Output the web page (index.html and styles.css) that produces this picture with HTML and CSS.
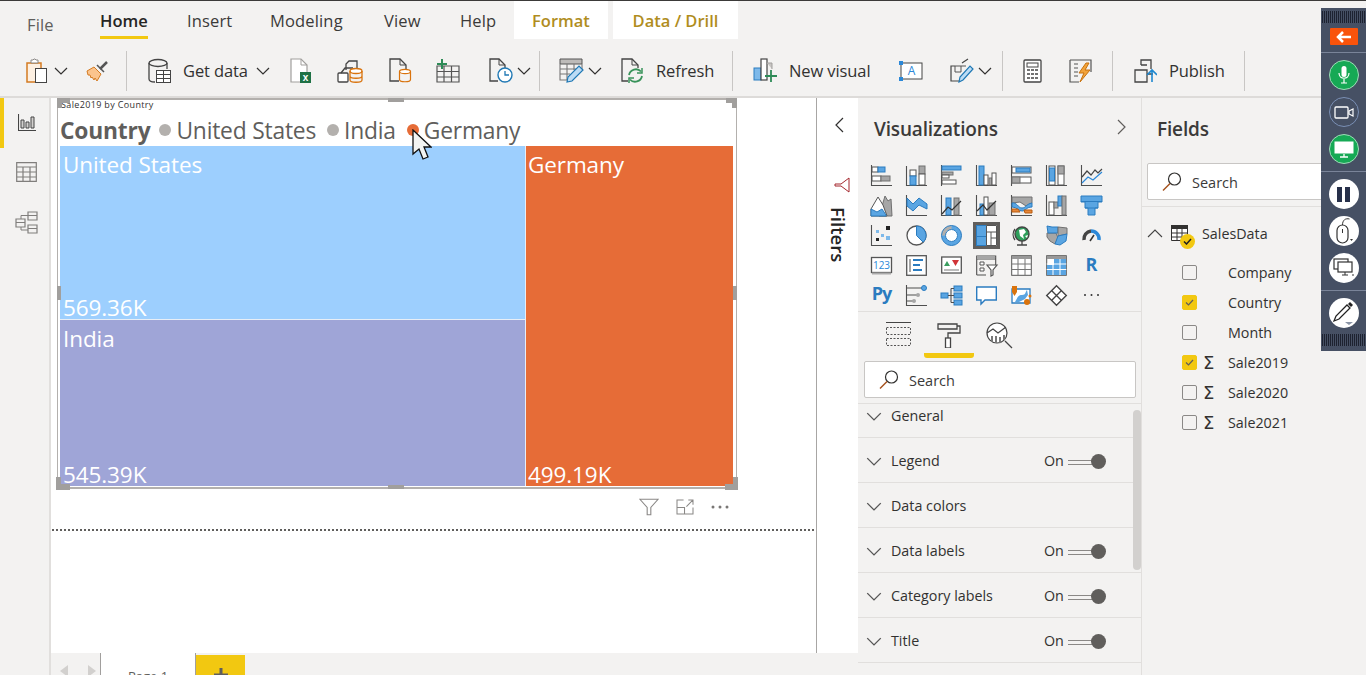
FILE: index.html
```html
<!DOCTYPE html>
<html lang="en">
<head>
    <meta charset="UTF-8">
    <title>Power BI Desktop</title>
    <link rel="stylesheet" href="styles.css">
</head>
<body>
<svg class="sprite" width="0" height="0">
    <symbol id="chev-down" viewBox="0 0 14 8"><path d="M1 1l6 6 6-6" fill="none" stroke="currentColor" stroke-width="1.200"/></symbol>
    <symbol id="lens" viewBox="0 0 20 20"><circle cx="12.500" cy="7" r="6" fill="none" stroke="#323130" stroke-width="1.200"/><path d="M8 11.500L1 18.500" stroke="#a4501c" stroke-width="1.400"/></symbol>
</svg>

<div class="app">
    <header class="ribbon">
        <nav class="tabs">
            <a class="tab tab-file">File</a>
            <a class="tab tab-active">Home</a>
            <a class="tab">Insert</a>
            <a class="tab">Modeling</a>
            <a class="tab">View</a>
            <a class="tab">Help</a>
            <a class="tab-context tab-format">Format</a>
            <a class="tab-context tab-data">Data / Drill</a>
        </nav>
        <div class="toolbar">
            <svg class="tool at-26" width="24" height="26" viewBox="0 0 24 26"><rect x="1" y="5" width="14" height="19" fill="#fdf0e2" stroke="#d47b22" stroke-width="1.500"/><path d="M5 5V2h2l1-1h1l1 1h2v3z" fill="#fff" stroke="#8a8886"/><rect x="9.500" y="10.500" width="11" height="14" fill="#fff" stroke="#444"/></svg>
            <svg class="chev"><use href="#chev-down"/></svg>
            <svg class="tool gap-18" width="24" height="24" viewBox="0 0 24 24"><path d="M1 12l7-4 7 7-4 7-2-3-1 2-2-3-1 1-1-3-2 0z" fill="#fbc48d" stroke="#d47b22"/><path d="M14 10l7-7" stroke="#555" stroke-width="2.500"/><path d="M11 6l7 7" stroke="#555" stroke-width="1.500"/></svg>
            <span class="divider divider-first"></span>
            <svg class="tool" width="24" height="26" viewBox="0 0 24 26"><ellipse cx="10" cy="5" rx="9" ry="3.500" fill="none" stroke="#444" stroke-width="1.300"/><path d="M1 5v16c0 2 3 3 6 3M19 5v6" fill="none" stroke="#444" stroke-width="1.300"/><rect x="8.500" y="12.500" width="14" height="12" fill="#fff" stroke="#444"/><path d="M8.500 16.500h14M8.500 20.500h14M15.500 12.500v12" stroke="#444"/></svg>
            <span class="tool-label label-get">Get data</span>
            <svg class="chev chev-get"><use href="#chev-down"/></svg>
            <svg class="tool gap-20" width="22" height="26" viewBox="0 0 22 26"><path d="M1 1h10l6 6v17H1z" fill="#fff" stroke="#a19f9d" stroke-width="1.200"/><path d="M11 1v6h6" fill="none" stroke="#a19f9d"/><rect x="10" y="14" width="11" height="11" fill="#1e7145"/><text class="xl" x="15.500" y="23">x</text></svg>
            <svg class="tool gap-25" width="26" height="24" viewBox="0 0 26 24"><path d="M9 11V5l3-3h8v7" fill="none" stroke="#444" stroke-width="1.300"/><rect x="1" y="14" width="10" height="9" rx="1" fill="#fff" stroke="#444" stroke-width="1.300"/><path d="M4 14l4-5h8" fill="none" stroke="#444" stroke-width="1.300"/><ellipse cx="19" cy="12" rx="6" ry="2.500" fill="#fff" stroke="#d9730d" stroke-width="1.300"/><path d="M13 12v9c0 3 12 3 12 0v-9M13 17c0 3 12 3 12 0" fill="none" stroke="#d9730d" stroke-width="1.300"/></svg>
            <svg class="tool gap-26" width="23" height="25" viewBox="0 0 23 25"><path d="M10 23H1V1h10l6 6v4" fill="none" stroke="#444" stroke-width="1.300"/><path d="M11 1v6h6" fill="none" stroke="#444"/><ellipse cx="16" cy="13.500" rx="5.500" ry="2.200" fill="#fff" stroke="#d9730d" stroke-width="1.200"/><path d="M10.500 13.500v8c0 3 11 3 11 0v-8" fill="none" stroke="#d9730d" stroke-width="1.200"/></svg>
            <svg class="tool gap-24" width="24" height="24" viewBox="0 0 24 24"><path d="M1 7h22v16H1zM1 12.500h22M1 18h22M8 7v16M15.500 7v16" fill="none" stroke="#555" stroke-width="1.200"/><path d="M6 0v10M1 5h10" stroke="#2e8b57" stroke-width="2"/></svg>
            <svg class="tool gap-29" width="24" height="25" viewBox="0 0 24 25"><path d="M9 23H1V1h9l6 6v3" fill="none" stroke="#444" stroke-width="1.300"/><path d="M10 1v6h6" fill="none" stroke="#444"/><circle cx="16" cy="17" r="7" fill="#fff" stroke="#1f78b4" stroke-width="1.400"/><path d="M16 13v4h4" fill="none" stroke="#1f78b4" stroke-width="1.300"/></svg>
            <svg class="chev"><use href="#chev-down"/></svg>
            <span class="divider divider-a"></span>
            <svg class="tool gap-19" width="25" height="25" viewBox="0 0 25 25"><path d="M1 1h22v5H1z" fill="#bdbbb9" stroke="#555"/><path d="M1 6v16h9M23 6v5M8 6v16M15 6v6M1 11h16M1 16h10" fill="none" stroke="#777" stroke-width="1.100"/><path d="M8 24l1-5L20 8l4 4L13 23z" fill="#bcdcf5" stroke="#1f78b4" stroke-width="1.200"/></svg>
            <svg class="chev"><use href="#chev-down"/></svg>
            <svg class="tool gap-19" width="23" height="25" viewBox="0 0 23 25"><path d="M7 23H1V1h10l6 6v3" fill="none" stroke="#444" stroke-width="1.300"/><path d="M11 1v6h6" fill="none" stroke="#444"/><path d="M8 17a7 7 0 0 1 12-3.500M21 18a7 7 0 0 1-12 3.500" fill="none" stroke="#38935a" stroke-width="1.800"/><path d="M21 10v5h-5M8 25v-5h5" fill="none" stroke="#38935a" stroke-width="1.500"/></svg>
            <span class="tool-label label-refresh">Refresh</span>
            <span class="divider divider-b"></span>
            <svg class="tool gap-20" width="24" height="25" viewBox="0 0 24 25"><rect x="1" y="10" width="7" height="12" fill="#7db9ea" stroke="#2b7cc0"/><rect x="8" y="1" width="6" height="21" fill="#fff" stroke="#444" stroke-width="1.200"/><path d="M14 5h5v6" fill="#c8c6c4" stroke="#a19f9d"/><path d="M18 12v12M12 18h12" stroke="#2e8b57" stroke-width="1.800"/></svg>
            <span class="tool-label label-visual">New visual</span>
            <svg class="tool gap-27" width="25" height="22" viewBox="0 0 25 22"><rect x="2" y="3" width="21" height="16" fill="#fff" stroke="#444"/><rect x="0" y="1" width="4" height="4" fill="#2b88d8"/><rect x="0" y="17" width="4" height="4" fill="#2b88d8"/><text class="a-mark" x="12.500" y="15">A</text></svg>
            <svg class="tool gap-26" width="24" height="25" viewBox="0 0 24 25"><path d="M10 23H1V8h4M12 5l6-4" fill="none" stroke="#444" stroke-width="1.200"/><path d="M5 8h6v6H5zM11 8h5" fill="none" stroke="#555"/><path d="M9 24l1-5L20 8l3 3-10 11z" fill="#bcdcf5" stroke="#1f78b4" stroke-width="1.200"/></svg>
            <svg class="chev"><use href="#chev-down"/></svg>
            <span class="divider divider-c"></span>
            <svg class="tool gap-20" width="19" height="24" viewBox="0 0 19 24"><rect x="1" y="1" width="17" height="22" rx="1" fill="#fff" stroke="#444" stroke-width="1.300"/><rect x="4" y="4" width="11" height="4" fill="none" stroke="#444"/><path d="M4 11h3M8 11h3M12 11h3M4 15h3M8 15h3M12 15h3M4 19h3M8 19h3M12 19h3" stroke="#444" stroke-width="1.500"/></svg>
            <svg class="tool gap-27" width="23" height="24" viewBox="0 0 23 24"><path d="M1 1h21v12M1 1v22h9M5 5h4M5 9h4M5 13h4M5 17h4" fill="none" stroke="#555" stroke-width="1.200"/><path d="M17 4l-7 10h5l-4 9 10-12h-5l4-7z" fill="#f2a33a" stroke="#c8710c"/></svg>
            <span class="divider divider-d"></span>
            <svg class="tool gap-20" width="24" height="24" viewBox="0 0 24 24"><path d="M8 6V1h10v9" fill="none" stroke="#444" stroke-width="1.300"/><path d="M8 6h6M2 11h12v12H2zM14 15h6" fill="none" stroke="#444" stroke-width="1.300"/><path d="M19 23V11M14 16l5-5 5 5" fill="none" stroke="#1f88d0" stroke-width="1.600"/></svg>
            <span class="tool-label label-publish">Publish</span>
            <span class="divider divider-d"></span>
        </div>
    </header>

    <div class="main">
        <aside class="sidenav">
            <div class="side-item side-active">
                <svg width="18" height="17" viewBox="0 0 18 17"><path d="M.5 0v16.500H18" fill="none" stroke="#444" stroke-width="1.100"/><path d="M3 6h3v8H3zM8 8h3v6H8zM13 3h3v11h-3z" fill="#d2d0ce" stroke="#444"/></svg>
            </div>
            <div class="side-item">
                <svg width="21" height="20" viewBox="0 0 21 20"><path d="M.7.7h19.600v18.600H.7zM.7 5h19.600M.7 10h19.600M.7 15h19.600M7 5v14.300M14 5v14.300" fill="none" stroke="#807e7c" stroke-width="1.200"/></svg>
            </div>
            <div class="side-item">
                <svg width="23" height="23" viewBox="0 0 23 23"><path d="M6 9V4.500h8M6 15v4h8" fill="none" stroke="#807e7c"/><path d="M1 8h9v8H1zM1 11.500h9M13 1h9v8h-9zM13 4.500h9M13 14h9v8h-9zM13 17.500h9" fill="#f3f2f1" stroke="#807e7c" stroke-width="1.200"/></svg>
            </div>
        </aside>

        <div class="middle">
            <div class="work">
                <section class="canvas">
                    <div class="visual">
                        <div class="visual-title">Sale2019 by Country</div>
                        <div class="legend">
                            <b>Country</b>
                            <i class="dot"></i><span>United States</span>
                            <i class="dot"></i><span>India</span>
                            <i class="dot dot-on"></i><span>Germany</span>
                        </div>
                        <div class="treemap">
                            <div class="tile tile-us"><span>United States</span><span class="tile-value">569.36K</span></div>
                            <div class="tile tile-de"><span>Germany</span><span class="tile-value">499.19K</span></div>
                            <div class="tile tile-in"><span>India</span><span class="tile-value">545.39K</span></div>
                        </div>
                        <i class="handle corner-tl"></i><i class="handle corner-tr"></i><i class="handle corner-bl"></i><i class="handle corner-br"></i>
                        <i class="handle mid-t"></i><i class="handle mid-b"></i><i class="handle mid-l"></i><i class="handle mid-r"></i>
                        <svg class="cursor" width="20" height="32" viewBox="0 0 20 32"><path d="M1 1v24l6-5 4 10 5-2-4-10h7z" fill="#f3f4f2" stroke="#111" stroke-width="1.300"/></svg>
                    </div>
                    <div class="visual-actions">
                        <svg width="20" height="18" viewBox="0 0 22 19"><path d="M1 1h20l-8 9v8H9v-8z" fill="none" stroke="#8a8886" stroke-width="1.200"/></svg>
                        <svg width="18" height="16" viewBox="0 0 19 17"><path d="M8 1H1v15h17V9M1 9h8v7M11 8l7-7M13 1h5v5" fill="none" stroke="#8a8886" stroke-width="1.100"/></svg>
                        <svg width="18" height="4" viewBox="0 0 18 4"><circle cx="2" cy="2" r="1.500" fill="#797775"/><circle cx="9" cy="2" r="1.500" fill="#797775"/><circle cx="16" cy="2" r="1.500" fill="#797775"/></svg>
                    </div>
                    <div class="page-edge"></div>
                </section>
                <aside class="filters">
                    <svg width="10" height="16" viewBox="0 0 10 16"><path d="M9 1L2 8l7 7" fill="none" stroke="#323130" stroke-width="1.200"/></svg>
                    <svg class="filters-icon" width="16" height="16" viewBox="0 0 16 16"><path d="M15 1v14L7 9H1V7h6z" fill="none" stroke="#a4262c" stroke-width="1"/></svg>
                    <span class="filters-text">Filters</span>
                </aside>
            </div>
            <div class="pagebar">
                <svg class="page-arrow" width="8" height="12" viewBox="0 0 8 12"><path d="M8 0v12L0 6z" fill="#d2d0ce"/></svg>
                <svg class="page-arrow" width="8" height="12" viewBox="0 0 8 12"><path d="M0 0v12l8-6z" fill="#d2d0ce"/></svg>
                <span class="page-tab">Page 1</span>
                <span class="page-add"><svg width="14" height="14" viewBox="0 0 14 14"><path d="M7 0v14M0 7h14" stroke="#605e5c" stroke-width="3"/></svg></span>
            </div>
        </div>

        <aside class="viz">
            <div class="pane-head">
                <h2>Visualizations</h2>
                <svg width="10" height="16" viewBox="0 0 10 16"><path d="M1 1l7 7-7 7" fill="none" stroke="#605e5c" stroke-width="1.200"/></svg>
            </div>
            <div class="viz-grid">
                <!-- row 1 -->
                <svg viewBox="0 0 21 21"><path class="ax" d="M.5 0v20.500H21"/><rect class="wh" x="1" y="2" width="6" height="5"/><rect class="bl" x="7" y="2" width="7" height="5"/><rect class="wh" x="1" y="11" width="9" height="5"/><rect class="gy" x="10" y="11" width="9" height="5"/></svg>
                <svg viewBox="0 0 21 21"><path class="ax" d="M.5 20.500H21M.5 1v20"/><rect class="wh" x="4" y="5" width="6" height="6"/><rect class="bl" x="4" y="11" width="6" height="9"/><rect class="gy" x="13" y="1" width="6" height="8"/><rect class="wh" x="13" y="9" width="6" height="11"/></svg>
                <svg viewBox="0 0 21 21"><path class="ax" d="M.5 0v21"/><rect class="bl" x="1" y="1" width="19" height="4"/><rect class="gy" x="1" y="7" width="11" height="3"/><rect class="wh" x="1" y="10" width="7" height="3"/><rect class="wh" x="1" y="15" width="14" height="4"/></svg>
                <svg viewBox="0 0 21 21"><path class="ax" d="M.5 0v20.500H21"/><rect class="bl" x="3" y="1" width="5" height="19"/><rect class="wh" x="8" y="10" width="4" height="10"/><rect class="gy" x="13" y="13" width="3" height="7"/><rect class="wh" x="16" y="8" width="4" height="12"/></svg>
                <svg viewBox="0 0 21 21"><path class="ax" d="M.5 0v21"/><rect class="wh" x="1" y="2" width="19" height="6"/><rect class="bl" x="5" y="3" width="14" height="4"/><rect class="wh" x="1" y="12" width="19" height="6"/><rect class="gy" x="1" y="12" width="8" height="6"/></svg>
                <svg viewBox="0 0 21 21"><path class="ax" d="M.5 20.500H21M.5 0v21"/><rect class="wh" x="3" y="1" width="6" height="19"/><rect class="bl" x="3.500" y="3" width="5" height="13"/><rect class="wh" x="12" y="1" width="6" height="19"/><rect class="gy" x="12" y="1" width="6" height="8"/></svg>
                <svg viewBox="0 0 21 21"><path class="ax" d="M.5 0v20.500H21"/><path d="M1 12l5-6 4 4 4-5 3 3 4-4" fill="none" stroke="#444" stroke-width="1.200"/><path d="M1 18l6-6 5 3 9-8" fill="none" stroke="#2b88d8" stroke-width="1.200"/></svg>
                <!-- row 2 -->
                <svg viewBox="0 0 21 21"><path class="gy" d="M8 21l6-20 3 5 3-2 1 17z"/><path class="wh" d="M0 14L7 2l5 8 4 11H0z"/><path class="bl" d="M0 14l6 3 5-3 4 6v1H0z"/></svg>
                <svg viewBox="0 0 21 21"><path class="ax" d="M.5 0v20.500H21"/><path class="bl" d="M1 3l6 6 6-6 8 6v5l-8-4-6 6-6-5z"/></svg>
                <svg viewBox="0 0 21 21"><path class="ax" d="M.5 0v20.500H21"/><rect class="bl" x="5" y="3" width="5" height="17"/><rect class="gy" x="13" y="3" width="5" height="17"/><path d="M1 19l6-7 4 3 9-9" fill="none" stroke="#333" stroke-width="1.200"/></svg>
                <svg viewBox="0 0 21 21"><path class="ax" d="M.5 0v20.500H21"/><rect class="bl" x="4" y="9" width="4" height="11"/><rect class="wh" x="8" y="2" width="4" height="18"/><rect class="gy" x="13" y="8" width="6" height="12"/><path d="M1 16l6-6 4 5 9-9" fill="none" stroke="#333" stroke-width="1.200"/></svg>
                <svg viewBox="0 0 21 21"><path class="ax" d="M.5 0v20.500H21"/><path class="gy" d="M1 2h20v6l-6 3-6-4-8 1z"/><path class="bl" d="M1 8c5-1 6 5 10 5s4-4 10-5v4c-6 0-6 4-10 4S6 12 1 12z"/><path d="M1 14h6l2 3H1zM13 15h8v3h-7z" fill="#e8883a" stroke="#b85c10"/></svg>
                <svg viewBox="0 0 21 21"><path class="ax" d="M.5 0v20.500H21"/><rect class="wh" x="3" y="7" width="5" height="13"/><rect class="gy" x="8" y="7" width="4" height="6"/><rect class="bl" x="12" y="1" width="4" height="10"/><rect class="gy" x="16" y="1" width="4" height="19"/></svg>
                <svg viewBox="0 0 21 21"><path class="bl" d="M0 1h21v6h-4v6h-3v7H7v-7H4V7H0z"/><path d="M0 6.500h21M4 13h13" stroke="#2b7cc0" fill="none"/></svg>
                <!-- row 3 -->
                <svg viewBox="0 0 21 21"><path class="ax" d="M.5 0v20.500H21"/><rect x="15" y="1" width="4" height="4" fill="#222"/><rect x="5" y="5" width="3" height="3" fill="#7db9ea"/><rect x="10" y="9" width="3" height="3" fill="#7db9ea"/><rect x="15" y="11" width="4" height="4" fill="#7db9ea"/><rect x="5" y="13" width="3" height="3" fill="#222"/></svg>
                <svg viewBox="0 0 21 21"><circle class="wh" cx="10.500" cy="10.500" r="9.500" stroke-width="1.300"/><path class="bl" d="M10.500 1a9.500 9.500 0 0 1 6.700 16.200l-6.700-6.700z"/></svg>
                <svg viewBox="0 0 21 21"><circle cx="10.500" cy="10.500" r="8" fill="none" stroke="#5aa5e2" stroke-width="4"/><path d="M2.500 10.500a8 8 0 0 1 8-8" fill="none" stroke="#b3b0ad" stroke-width="4"/><circle cx="10.500" cy="10.500" r="10" fill="none" stroke="#2b7cc0"/><circle cx="10.500" cy="10.500" r="6" fill="#fff" stroke="#2b7cc0"/></svg>
                <div class="viz-selected"><svg viewBox="0 0 21 21"><rect class="bl" x=".5" y=".5" width="10" height="11"/><rect class="bl" x=".5" y="11.500" width="10" height="9"/><path class="wh" d="M10.500.5h10v20h-10zM10.500 7h10M15 7v13.500M15 13h5.500"/></svg></div>
                <svg viewBox="0 0 21 21"><circle cx="11" cy="9" r="7" fill="#2e9e5b" stroke="#444" stroke-width="1.400"/><path d="M8 5l5-1 2 3-3 3 1 4-4-3zM14 11l3-1-1 3z" fill="#fff"/><path d="M6 20h10M11 16v4M4 4a9 9 0 0 0 0 11" fill="none" stroke="#444" stroke-width="1.300"/></svg>
                <svg viewBox="0 0 21 21"><path class="gy" d="M1 8h9l2 5-3 6-5-3-3-4z"/><path class="bl" d="M1 1l5 1h6v6H2z"/><path class="gy" d="M12 2l9 1v6l-9 2z"/><path class="bl" d="M12 11l9-2-1 7-6 4-5-1z"/></svg>
                <svg viewBox="0 0 21 21"><path d="M3 15a8 8 0 0 1 7-9" fill="none" stroke="#444" stroke-width="3.500"/><path d="M10 6a8 8 0 0 1 8 9" fill="none" stroke="#2b88d8" stroke-width="3.500"/><path d="M9 16l4-6" stroke="#333" stroke-width="1.500"/></svg>
                <!-- row 4 -->
                <svg viewBox="0 0 21 21"><rect class="wh" x=".5" y="2.500" width="20" height="15" stroke-width="1.300"/><path d="M1 18.500h19" stroke="#aaa" stroke-width="2"/><text class="card-num" x="10.500" y="14">123</text></svg>
                <svg viewBox="0 0 21 21"><rect class="wh" x=".7" y=".7" width="19.600" height="19.600" stroke-width="1.300"/><path d="M4 4v13" stroke="#a6a6a6" stroke-width="2"/><path d="M7 5h10M7 10h7M7 15h9" stroke="#2b7cc0" stroke-width="2"/></svg>
                <svg viewBox="0 0 21 21"><rect class="wh" x=".7" y="2" width="19.600" height="16" stroke-width="1.300"/><path d="M3 11l3-5 3 5z" fill="#3a9e5f"/><path d="M11 5h7l-3.500 6z" fill="#d13438"/><path d="M3 15h15" stroke="#a6a6a6" stroke-width="1.500"/></svg>
                <svg viewBox="0 0 21 21"><path class="ax" d="M.7 20V1h19v9M.7 4h19M10 20H.7"/><path d="M1 1h18v3H1z" fill="#a6a6a6"/><path class="wh" d="M4 7h4v3H4zM4 13h4v3H4z"/><path d="M11 10h10l-4 5v5l-2 1v-6z" fill="#fff" stroke="#555" stroke-width="1.200"/></svg>
                <svg viewBox="0 0 21 21"><rect class="wh" x=".7" y=".7" width="19.600" height="19.600" stroke="#777"/><path d="M1 1h19v3H1z" fill="#999"/><path d="M.7 9h19.600M.7 14.500h19.600M7 4v16M14 4v16" stroke="#777" fill="none"/></svg>
                <svg viewBox="0 0 21 21"><rect class="wh" x=".7" y=".7" width="19.600" height="19.600" stroke="#777"/><path d="M1 1h19v3H1z" fill="#999"/><path d="M1 10h19v10H1zM8 4h12v6H8z" fill="#5aa5e2"/><path d="M.7 9h19.600M.7 14.500h19.600M7 4v16M14 4v16" stroke="#fff" fill="none"/></svg>
                <svg viewBox="0 0 21 21"><text class="lang-r" x="10.500" y="16">R</text></svg>
                <!-- row 5 -->
                <svg viewBox="0 0 21 21"><text class="lang-py" x="10.500" y="15">Py</text></svg>
                <svg viewBox="0 0 21 21"><path class="ax" d="M.5 0v20.500H21M.5 3H16M.5 10H11M.5 16H8"/><circle cx="18" cy="3" r="2.500" fill="#5aa5e2" stroke="#2b7cc0"/><circle cx="12" cy="10" r="2" fill="#a6a6a6"/><circle cx="8" cy="16" r="2" fill="#a6a6a6"/></svg>
                <svg viewBox="0 0 21 21"><rect class="bl" x="0" y="8" width="7" height="5"/><rect class="bl" x="13" y="1" width="8" height="5"/><rect class="bl" x="13" y="8" width="8" height="5"/><rect class="bl" x="13" y="15" width="8" height="5"/><path class="ax" d="M7 10.500h6M10 3.500v14M10 3.500h3M10 17.500h3"/></svg>
                <svg viewBox="0 0 21 21"><path d="M.7 2h19.600v13H9l-4 4v-4H.7z" fill="#fff" stroke="#2b7cc0" stroke-width="1.400"/></svg>
                <svg viewBox="0 0 21 21"><path d="M1 4h18v14H1z" fill="#fff" stroke="#2b7cc0" stroke-width="1.300"/><path d="M4 17c3-5 3-7 7-7s3-3 5-5l1 5-3 4-6 3z" fill="#5aa5e2"/><path d="M1 1h5v6l-2.500 4L1 7z" fill="#d9730d"/><circle cx="16" cy="17" r="3" fill="#d9730d"/><circle cx="19" cy="11" r="1.500" fill="#d9730d"/></svg>
                <svg viewBox="0 0 21 21"><path d="M10.500.7l9.800 9.800-9.800 9.800L.7 10.500z" fill="#fff" stroke="#444" stroke-width="1.400"/><path d="M5.500 5.500l10 10M10.500 10.500l5-5M5.500 15.500l5-5" stroke="#444" stroke-width="1.400"/></svg>
                <svg viewBox="0 0 21 21"><circle cx="4" cy="10" r="1" fill="#333"/><circle cx="10.500" cy="10" r="1" fill="#333"/><circle cx="17" cy="10" r="1" fill="#333"/></svg>
            </div>
            <div class="viz-tabs">
                <svg class="vt" width="25" height="25" viewBox="0 0 25 25"><path d="M0 .5h25" stroke="#444"/><path d="M.5 5.500h24v7H.5zM.5 16.500h24v7H.5z" fill="none" stroke="#555" stroke-dasharray="2 1.500"/></svg>
                <span class="vt-active"><svg width="24" height="25" viewBox="0 0 24 25"><path d="M1 1h19v5H1zM20 3h3v7H11v5" fill="none" stroke="#444" stroke-width="1.300"/><rect x="8.500" y="15" width="5" height="10" fill="#fff" stroke="#444" stroke-width="1.300"/></svg></span>
                <svg class="vt" width="27" height="27" viewBox="0 0 27 27"><circle cx="11" cy="11" r="10" fill="#fff" stroke="#444" stroke-width="1.200"/><path d="M1 11l6-4 5 4 8-6" fill="none" stroke="#444" stroke-width="1.200"/><path d="M6 20v-6M10 21v-7M14 21v-6M18 18v-5" stroke="#777" stroke-width="2"/><path d="M19 19l7 7" stroke="#444" stroke-width="1.300"/></svg>
            </div>
            <div class="search viz-search"><svg width="20" height="20"><use href="#lens"/></svg><span>Search</span></div>
            <div class="sections">
                <div class="section section-first"><svg class="acc"><use href="#chev-down"/></svg><span>General</span></div>
                <div class="section"><svg class="acc"><use href="#chev-down"/></svg><span>Legend</span><em>On</em><i class="toggle"></i></div>
                <div class="section"><svg class="acc"><use href="#chev-down"/></svg><span>Data colors</span></div>
                <div class="section"><svg class="acc"><use href="#chev-down"/></svg><span>Data labels</span><em>On</em><i class="toggle"></i></div>
                <div class="section"><svg class="acc"><use href="#chev-down"/></svg><span>Category labels</span><em>On</em><i class="toggle"></i></div>
                <div class="section"><svg class="acc"><use href="#chev-down"/></svg><span>Title</span><em>On</em><i class="toggle"></i></div>
                <div class="scrollthumb"></div>
            </div>
        </aside>

        <aside class="fields">
            <div class="pane-head"><h2>Fields</h2></div>
            <div class="search fields-search"><svg width="20" height="20"><use href="#lens"/></svg><span>Search</span></div>
            <div class="tree">
                <div class="tree-table">
                    <svg class="tree-chev" width="16" height="9" viewBox="0 0 16 9"><path d="M1 8l7-7 7 7" fill="none" stroke="#444" stroke-width="1.100"/></svg>
                    <span class="table-icon">
                        <svg width="17" height="16" viewBox="0 0 17 16"><path d="M.5.5h16v15H.5z" fill="#fff" stroke="#323130"/><path d="M0 0h17v4H0z" fill="#323130"/><path d="M.5 8h16M.5 12h16M6 4v12M11 4v12" stroke="#323130"/></svg>
                        <i class="table-badge"><svg width="9" height="7" viewBox="0 0 9 7"><path d="M1 3.500L3.500 6 8 1" fill="none" stroke="#201f1e" stroke-width="1.500"/></svg></i>
                    </span>
                    <span>SalesData</span>
                </div>
                <div class="field"><i class="check"></i><i class="sigma"></i><span>Company</span></div>
                <div class="field"><i class="check check-on"><svg width="9" height="7" viewBox="0 0 9 7"><path d="M1 3.500L3.500 6 8 1" fill="none" stroke="#605e5c" stroke-width="1.200"/></svg></i><i class="sigma"></i><span>Country</span></div>
                <div class="field"><i class="check"></i><i class="sigma"></i><span>Month</span></div>
                <div class="field"><i class="check check-on"><svg width="9" height="7" viewBox="0 0 9 7"><path d="M1 3.500L3.500 6 8 1" fill="none" stroke="#605e5c" stroke-width="1.200"/></svg></i><i class="sigma">&Sigma;</i><span>Sale2019</span></div>
                <div class="field"><i class="check"></i><i class="sigma">&Sigma;</i><span>Sale2020</span></div>
                <div class="field"><i class="check"></i><i class="sigma">&Sigma;</i><span>Sale2021</span></div>
            </div>
        </aside>
    </div>

    <div class="recorder">
        <div class="grill"></div>
        <button class="rec-back"><svg width="16" height="12" viewBox="0 0 16 12"><path d="M15 6H3M7 1L2 6l5 5" fill="none" stroke="#fff" stroke-width="2.500"/></svg></button>
        <hr>
        <button class="rec-btn rec-green"><svg width="12" height="18" viewBox="0 0 12 18"><rect x="3.500" y="0" width="5" height="11" rx="2.500" fill="#fff"/><path d="M1 7c0 7 10 7 10 0M6 13v4M3 17h6" fill="none" stroke="#fff" stroke-width="1.200"/></svg></button>
        <button class="rec-btn rec-dark"><svg width="20" height="13" viewBox="0 0 20 13"><rect x="1" y="1" width="13" height="11" rx="1" fill="none" stroke="#fff" stroke-width="1.300"/><path d="M15 5l4-2v7l-4-2z" fill="none" stroke="#fff" stroke-width="1.200"/></svg></button>
        <button class="rec-btn rec-green"><svg width="20" height="17" viewBox="0 0 20 17"><rect x="1" y="1" width="18" height="11" fill="#fff" stroke="#fff"/><path d="M10 13v3M6 16h8" stroke="#fff" stroke-width="1.300"/></svg></button>
        <hr>
        <button class="rec-btn rec-white"><svg width="14" height="15" viewBox="0 0 14 15"><path d="M0 0h5v15H0zM8 0h5v15H8z" fill="#27304a"/></svg></button>
        <button class="rec-btn rec-white"><svg width="20" height="28" viewBox="0 0 20 28"><rect x="3" y="8" width="11" height="18" rx="5.500" fill="none" stroke="#333" stroke-width="1.200"/><path d="M8.500 8c0-5 3-7 7-6M8.500 12v4" fill="none" stroke="#333"/><path d="M16 22h3l-1.500 2z" fill="#333"/></svg></button>
        <button class="rec-btn rec-white"><svg width="22" height="20" viewBox="0 0 22 20"><rect x="1" y="1" width="14" height="10" fill="none" stroke="#333" stroke-width="1.200"/><rect x="5" y="4" width="14" height="10" fill="#fff" stroke="#333" stroke-width="1.200"/><path d="M12 14v3M9 17h6M19 17h2" stroke="#333"/></svg></button>
        <hr>
        <button class="rec-btn rec-white"><svg width="22" height="24" viewBox="0 0 22 24"><path d="M1 20l2-5L14 4l3 3L6 18z" fill="#fff" stroke="#222" stroke-width="1.300"/><path d="M15 3l2-2 3 3-2 2z" fill="#222"/><path d="M12 21h8l-4 3z" fill="#8a94a6"/></svg></button>
        <div class="grill grill-bottom"></div>
    </div>
</div>
</body>
</html>
```

FILE: styles.css
```css
* {
    box-sizing: border-box;
}

html, body {
    margin: 0;
    height: 100%;
    overflow: hidden;
}

body {
    font-family: "Open Sans", "Noto Sans", sans-serif;
    color: #252423;
    background: #f3f2f1;
}

.sprite {
    position: absolute;
}

svg {
    display: block;
    flex: none;
}

i, em {
    font-style: normal;
}

.app {
    position: relative;
    width: 1366px;
    height: 675px;
    overflow: hidden;
    display: flex;
    flex-direction: column;
}

/* ribbon */
.ribbon {
    flex: none;
    height: 98px;
    border-top: 1px solid #3b3a39;
    border-bottom: 2px solid #dddbd9;
}

.tabs {
    height: 38px;
    display: grid;
    grid-template-columns: 73px 87px 83px 114px 76px 54px 99px 125px;
    padding-left: 27px;
    font-size: 16.500px;
}

.tab {
    width: fit-content;
    height: 38px;
    line-height: 40px;
    letter-spacing: .15px;
    color: #3b3a39;
}

.tab-file {
    line-height: 48px;
    color: #605e5c;
}

.tab-active {
    font-weight: 600;
    letter-spacing: 0;
    color: #252423;
    border-bottom: 3px solid #f2c811;
}

.tab-context {
    height: 38px;
    line-height: 40px;
    background: #fff;
    font-weight: 600;
    text-align: center;
    color: #b08d1e;
}

.tab-format {
    width: 94px;
}

.toolbar {
    height: 57px;
    display: flex;
    align-items: center;
    padding-top: 6px;
    color: #323130;
}

.tool-label {
    margin-left: 12px;
    font-size: 16.500px;
    letter-spacing: -.1px;
    white-space: nowrap;
}

.chev {
    width: 14px;
    height: 8px;
    margin-left: 4px;
    color: #323130;
}

.at-26 { margin-left: 26px; }
.gap-18 { margin-left: 18px; }
.gap-19 { margin-left: 19px; }
.gap-20 { margin-left: 20px; }
.gap-24 { margin-left: 24px; }
.gap-25 { margin-left: 25px; }
.gap-26 { margin-left: 26px; }
.gap-27 { margin-left: 27px; }
.gap-29 { margin-left: 29px; }

.divider {
    width: 1px;
    height: 40px;
    background: #c8c6c4;
}

.divider-first { margin: 0 21px 0 16px; }
.divider-a { margin-left: 8px; }
.divider-b { margin-left: 18px; }
.divider-c { margin-left: 10px; }
.divider-d { margin-left: 20px; }

.label-get { margin-left: 11px; width: 68px; }
.chev-get { margin-left: 5px; }
.label-refresh { width: 58px; }
.label-visual { width: 83px; }
.label-publish { width: 55px; }

.xl {
    font: 700 10px "Liberation Sans", sans-serif;
    fill: #fff;
    text-anchor: middle;
}

.a-mark {
    font: 12px "Open Sans", sans-serif;
    fill: #2b88d8;
    text-anchor: middle;
}

/* main row */
.main {
    flex: 1;
    min-height: 0;
    display: flex;
}

.sidenav {
    width: 51px;
    flex: none;
    border-right: 2px solid #e1dfdd;
}

.side-item {
    height: 50px;
    display: flex;
    align-items: center;
    justify-content: center;
    padding: 0 0 2px 4px;
}

.side-active {
    border-left: 4px solid #f2c811;
    padding-left: 0;
}

.middle {
    width: 807px;
    flex: none;
    display: flex;
    flex-direction: column;
}

.work {
    flex: 1;
    display: flex;
    background: #fff;
    min-height: 0;
}

.canvas {
    width: 766px;
    flex: none;
    border-right: 1px solid #a8a6a4;
    padding-left: 6px;
}

/* visual */
.visual {
    position: relative;
    width: 680px;
    height: 391px;
    border: 1px solid #b3b0ad;
    border-top-width: 2px;
    border-bottom-width: 2px;
    background: #fff;
    padding: 0 2px;
}

.visual-title {
    height: 10px;
    line-height: 10px;
    font-size: 9px;
    letter-spacing: .35px;
    color: #323130;
    padding-left: 1px;
    white-space: nowrap;
}

.legend {
    height: 36px;
    display: flex;
    align-items: center;
    padding-top: 4px;
    font-size: 22.800px;
    letter-spacing: -.2px;
    color: #605e5c;
    white-space: nowrap;
}

.legend b {
    font-weight: 700;
    margin-right: 9px;
}

.legend span {
    margin-right: 11px;
}

.dot {
    width: 12px;
    height: 12px;
    margin-right: 5px;
    border-radius: 50%;
    background: #b3b0ad;
}

.dot-on {
    background: #e66c37;
}

.treemap {
    width: 673px;
    height: 340px;
    display: grid;
    grid-template-columns: 465px 207px;
    grid-template-rows: 173px 166px;
    gap: 1px;
    background: #e8eef6;
}

.tile {
    display: flex;
    flex-direction: column;
    justify-content: space-between;
    padding: 4px 0 0 3px;
    color: #fff;
    font-size: 22.500px;
    line-height: 30px;
    letter-spacing: -.1px;
}

.tile-value {
    line-height: 22px;
}

.tile-us { background: #9dcffe; }
.tile-in { background: #9fa5d7; }
.tile-de { background: #e66c37; grid-row: 1 / 3; grid-column: 2; padding-left: 2px; }

.handle {
    position: absolute;
    background: #a19f9d;
}

.corner-tl { left: -1px; top: -2px; width: 13px; height: 5px; }
.corner-tr { right: -1px; top: -2px; width: 11px; height: 5px; }
.corner-bl { left: -2px; bottom: -3px; width: 14px; height: 6px; }
.corner-br { right: -2px; bottom: -3px; width: 13px; height: 6px; }
.corner-tl::after, .corner-tr::after, .corner-bl::after, .corner-br::after {
    content: "";
    position: absolute;
    width: 5px;
    height: 10px;
    background: #a19f9d;
}
.corner-tl::after { left: 0; top: 0; }
.corner-tr::after { right: 0; top: 0; }
.corner-bl::after { left: 0; bottom: 0; height: 13px; }
.corner-br::after { right: 0; bottom: 0; height: 13px; }
.mid-t { left: 330px; top: -2px; width: 16px; height: 4px; }
.mid-b { left: 330px; bottom: -2px; width: 16px; height: 4px; }
.mid-l { left: -1px; top: 186px; width: 4px; height: 14px; }
.mid-r { right: -1px; top: 186px; width: 4px; height: 14px; }

.cursor {
    position: absolute;
    left: 354px;
    top: 29px;
}

.visual-actions {
    width: 680px;
    height: 40px;
    display: flex;
    align-items: center;
    justify-content: flex-end;
    gap: 17px;
    padding: 0 8px 4px 0;
}

.page-edge {
    margin-left: -5px;
    width: 762px;
    border-top: 2px dotted #605e5c;
}

/* filters */
.filters {
    width: 41px;
    flex: none;
    padding: 19px 0 0 17px;
}

.filters-icon {
    margin: 44px 0 0 0;
}

.filters-text {
    display: block;
    margin-top: 14px;
    margin-left: -8px;
    writing-mode: vertical-rl;
    font-size: 18.500px;
    line-height: 24px;
    font-weight: 600;
    color: #252423;
}

.pagebar {
    height: 22px;
    flex: none;
    display: flex;
    background: #f3f2f1;
    padding-left: 3px;
}

.page-arrow {
    margin: 12px 0 0 6px;
}

.page-arrow + .page-arrow {
    margin: 12px 4px 0 20px;
}

.page-tab {
    width: 96px;
    padding-top: 14px;
    background: #fff;
    border-left: 1px solid #a19f9d;
    border-right: 1px solid #a19f9d;
    font-size: 13px;
    line-height: 18px;
    text-align: center;
    color: #605e5c;
}

.page-add {
    width: 49px;
    height: 20px;
    margin-top: 2px;
    padding: 13px 0 0 18px;
    background: #f2c811;
}

/* panes */
.viz {
    width: 284px;
    flex: none;
    position: relative;
    border-right: 1px solid #e1dfdd;
}

.pane-head {
    height: 63px;
    display: flex;
    align-items: flex-start;
    justify-content: space-between;
    padding: 19px 14px 0 16px;
}

.pane-head svg {
    margin-top: 2px;
}

.pane-head h2 {
    margin: 0;
    font-size: 19px;
    line-height: 24px;
    font-weight: 600;
    letter-spacing: -.15px;
    color: #3b3a39;
}

.fields .pane-head {
    height: 62px;
    padding-left: 15px;
}

.viz-grid {
    display: grid;
    grid-template-columns: repeat(7, 35px);
    grid-auto-rows: 30px;
    padding-left: 6px;
    height: 150px;
}

.viz-grid > svg, .viz-selected svg {
    width: 21px;
    height: 21px;
    margin: 4px 7px;
    overflow: visible;
}

.viz-selected {
    width: 27px;
    height: 27px;
    margin: 1px 4px;
    border: 3px solid #605e5c;
}

.viz-selected svg {
    margin: 0;
}

.ax {
    fill: none;
    stroke: #4f4f4f;
    stroke-width: 1.100;
}

.wh {
    fill: #fff;
    stroke: #555;
}

.bl {
    fill: #5aa5e2;
    stroke: #2b7cc0;
}

.gy {
    fill: #a6a6a6;
    stroke: #707070;
}

.card-num {
    font: 10px "Open Sans", sans-serif;
    fill: #2b88d8;
    text-anchor: middle;
}

.lang-r {
    font: 700 18px "Open Sans", sans-serif;
    fill: #2b7cc0;
    text-anchor: middle;
}

.lang-py {
    font: 700 18px "Open Sans", sans-serif;
    fill: #2b7cc0;
    text-anchor: middle;
    letter-spacing: -1px;
}

.viz-tabs {
    height: 50px;
    border-top: 1px solid #e1dfdd;
    display: flex;
    padding: 10px 0 0 28px;
    align-items: flex-start;
}

.vt + .vt-active {
    margin-left: 13px;
    width: 50px;
    height: 36px;
    padding: 1px 0 0 13px;
    border-bottom: 5px solid #f2c811;
    border-radius: 0 0 3px 3px;
}

.vt-active + .vt {
    margin-left: 12px;
}

.search {
    display: flex;
    align-items: center;
    gap: 10px;
    background: #fff;
    border: 1px solid #c8c6c4;
    border-radius: 2px;
    font-size: 14.500px;
    color: #3b3a39;
}

.search span {
    padding-top: 1px;
}

.viz-search {
    width: 272px;
    height: 37px;
    margin: 0 0 0 6px;
    padding-left: 14px;
}

.sections {
    position: relative;
    margin-top: 5px;
    border-top: 1px solid #e1dfdd;
}

.section {
    height: 45px;
    display: flex;
    align-items: center;
    padding-top: 1px;
    border-bottom: 1px solid #e1dfdd;
    font-size: 14.300px;
    color: #323130;
}

.section-first {
    height: 34px;
    padding: 0 0 10px;
}

.acc {
    width: 16px;
    height: 9px;
    margin: 2px 9px 0 8px;
    color: #555;
}

.section em {
    position: absolute;
    left: 186px;
}

.toggle {
    position: absolute;
    left: 210px;
    width: 38px;
    height: 15px;
    margin-top: 1px;
}

.toggle::before {
    content: "";
    position: absolute;
    left: 0;
    top: 6px;
    width: 26px;
    height: 3px;
    border-top: 1px solid #8a8886;
    border-bottom: 1px solid #8a8886;
}

.toggle::after {
    content: "";
    position: absolute;
    right: 0;
    top: 0;
    width: 15px;
    height: 15px;
    border-radius: 50%;
    background: #605e5c;
}

.scrollthumb {
    position: absolute;
    right: 0;
    top: 6px;
    width: 8px;
    height: 160px;
    border-radius: 4px;
    background: #d2d0ce;
}

.fields {
    flex: 1;
}

.fields-search {
    width: 215px;
    height: 37px;
    margin: 3px 0 0 5px;
    padding-left: 14px;
}

.tree {
    margin-top: 6px;
    border-top: 1px solid #e1dfdd;
    padding-top: 11px;
    font-size: 14.300px;
    color: #323130;
}

.tree-table {
    height: 30px;
    display: flex;
    align-items: center;
    padding-left: 5px;
    margin-bottom: 9px;
}

.tree-chev {
    margin-right: 8px;
}

.table-icon {
    position: relative;
    width: 17px;
    height: 16px;
    margin-right: 14px;
}

.table-badge {
    position: absolute;
    left: 9px;
    top: 9px;
    width: 15px;
    height: 15px;
    border-radius: 50%;
    background: #f2c811;
    display: flex;
    align-items: center;
    justify-content: center;
}

.field {
    height: 30px;
    display: flex;
    align-items: center;
    padding-left: 40px;
}

.check {
    width: 15px;
    height: 15px;
    flex: none;
    border: 1px solid #8a8886;
    border-radius: 2px;
    background: #f3f2f1;
    display: flex;
    align-items: center;
    justify-content: center;
}

.check-on {
    background: #f2c811;
    border-color: #f2c811;
}

.sigma {
    width: 31px;
    padding: 2px 0 0 6px;
    font-family: "DejaVu Sans", sans-serif;
    font-size: 18px;
    line-height: 20px;
    color: #323130;
}

/* screen recorder bar floats over the window */
.recorder {
    position: absolute;
    left: 1321px;
    top: 8px;
    width: 45px;
    height: 343px;
    background: #465064;
    display: flex;
    flex-direction: column;
    align-items: center;
    padding-top: 3px;
}

.recorder hr {
    width: 100%;
    height: 1px;
    margin: 0;
    border: 0;
    background: #7a8499;
    flex: none;
}

.grill {
    width: 43px;
    height: 12px;
    flex: none;
    background: repeating-linear-gradient(90deg, #1d2230 0 1px, #465064 1px 2px);
}

.grill-bottom {
    margin-top: 6px;
}

.recorder button {
    border: 0;
    padding: 0;
    display: flex;
    align-items: center;
    justify-content: center;
}

.rec-back {
    width: 28px;
    height: 17px;
    margin: 5px 0 7px;
    background: #f9530b;
    border-radius: 1px;
}

.rec-btn {
    width: 30px;
    height: 30px;
    border-radius: 50%;
    margin-top: 7px;
    flex: none;
}

.rec-btn + hr {
    margin-top: 7px;
}

.rec-green {
    background: #16a955;
    border: 1px solid #9fdcb8 !important;
}

.rec-dark {
    background: #465064;
    border: 1px solid #7a8fb5 !important;
}

.rec-white {
    background: #fff;
}
```
